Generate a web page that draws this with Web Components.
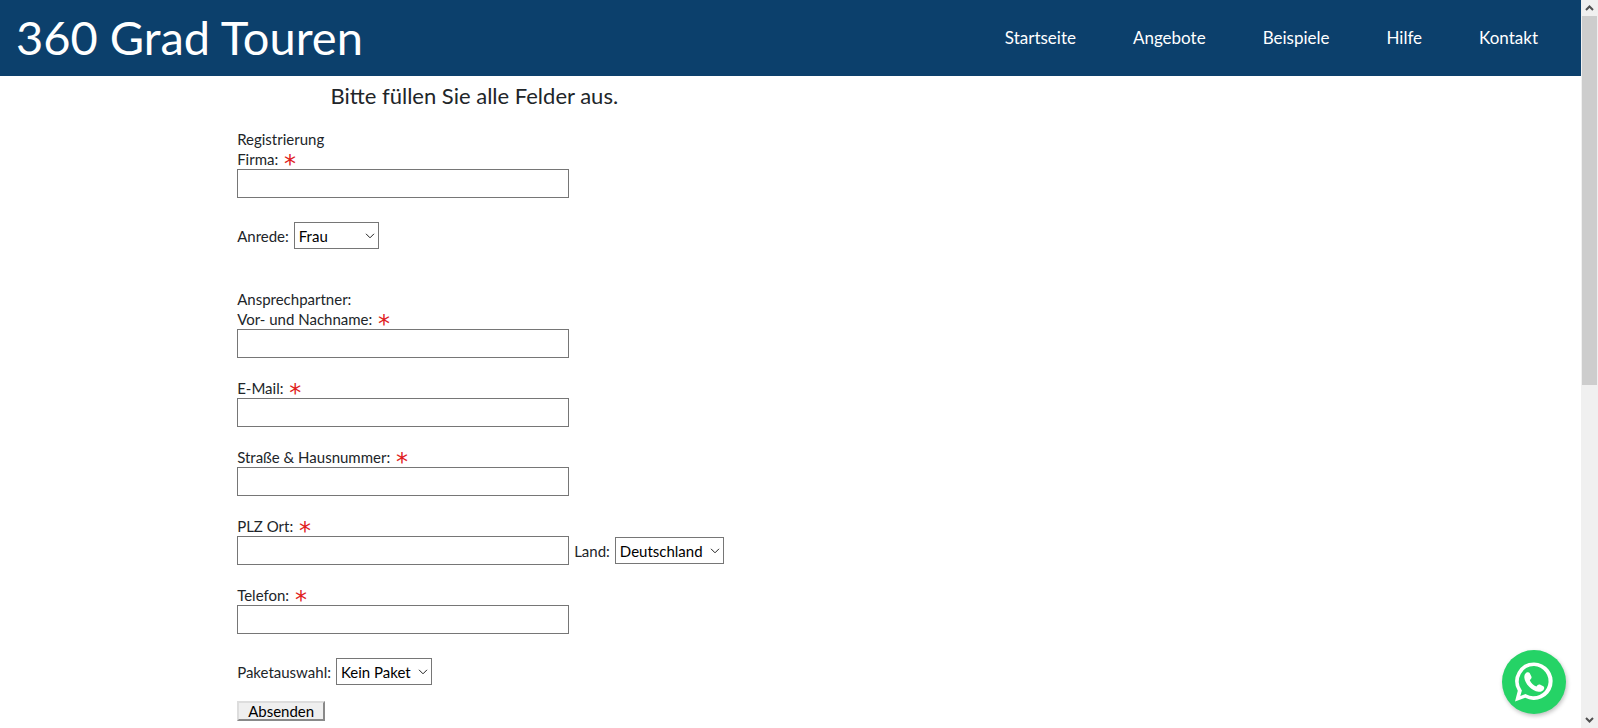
<!DOCTYPE html>
<html lang="de">
<head>
<meta charset="utf-8">
<meta name="viewport" content="width=device-width, initial-scale=1">
<title>360 Grad Touren</title>
<style>
  body {
    margin: 0;
    display: grid;
    grid-template-columns: minmax(0, 1fr) 17px;
    min-height: 100vh;
    background: #fff;
    color: #212529;
    font: 15px/20px Lato, "Liberation Sans", sans-serif;
  }
</style>
</head>
<body>
<div>
  <site-header>
    360 Grad Touren
    <nav-link slot="nav">Startseite</nav-link>
    <nav-link slot="nav">Angebote</nav-link>
    <nav-link slot="nav">Beispiele</nav-link>
    <nav-link slot="nav">Hilfe</nav-link>
    <nav-link slot="nav">Kontakt</nav-link>
  </site-header>
  <registration-form></registration-form>
</div>
<scroll-track></scroll-track>
<whatsapp-button></whatsapp-button>

<script>
class BaseElement extends HTMLElement {
  render(html) {
    if (!this.shadowRoot) this.attachShadow({ mode: 'open' });
    this.shadowRoot.innerHTML = html;
  }
}

customElements.define('nav-link', class extends BaseElement {
  connectedCallback() {
    this.render(`
      <style>
        :host { display: block; }
        a { color: #fff; text-decoration: none; font-size: 17px; }
      </style>
      <a href="#"><slot></slot></a>`);
  }
});

customElements.define('site-header', class extends BaseElement {
  connectedCallback() {
    this.render(`
      <style>
        :host { display: block; }
        header {
          display: flex; align-items: center; justify-content: space-between;
          box-sizing: border-box; min-height: 76px; padding: 0 43px 0 16px;
          background: #0c406c; color: #fff;
        }
        .brand { font-size: 47px; line-height: 60px; padding-bottom: 2px; }
        nav { display: flex; gap: 57px; }
      </style>
      <header>
        <div class="brand"><slot></slot></div>
        <nav><slot name="nav"></slot></nav>
      </header>`);
  }
});

customElements.define('text-field', class extends BaseElement {
  connectedCallback() {
    this.render(`
      <style>
        :host { display: block; }
        label { display: block; }
        .star {
          color: #e02020; font: 24px/0 "DejaVu Sans", sans-serif;
          vertical-align: -7px; margin-left: 2px;
        }
        input {
          display: block; box-sizing: border-box; width: 100%; height: 29px;
          margin: 0; padding: 4px; border: 1px solid #767676; border-radius: 0;
          background: #fff; font: inherit;
        }
      </style>
      <label for="field"><slot></slot> <span class="star">*</span></label>
      <input id="field" type="${this.getAttribute('type') || 'text'}" required>`);
  }
});

customElements.define('select-field', class extends BaseElement {
  connectedCallback() {
    const options = this.getAttribute('options').split('|')
      .map(text => `<option>${text}</option>`).join('');
    this.render(`
      <style>
        :host { display: flex; align-items: center; gap: 5px; }
        .box { display: grid; align-items: center; width: var(--select-width, auto); }
        select, svg { grid-area: 1 / 1; }
        select {
          appearance: none; box-sizing: border-box; width: 100%; height: 27px;
          margin: 0; padding: 0 20px 0 4px; border: 1px solid #767676;
          border-radius: 0; background: #fff; color: #000; font: inherit;
        }
        svg { justify-self: end; margin-right: 4px; pointer-events: none; }
      </style>
      <label for="choice"><slot></slot></label>
      <span class="box">
        <select id="choice">${options}</select>
        <svg width="10" height="6" viewBox="0 0 10 6" fill="none" stroke="#222"><path d="M1 .8 5 4.8 9 .8"/></svg>
      </span>`);
  }
});

customElements.define('registration-form', class extends BaseElement {
  connectedCallback() {
    this.render(`
      <style>
        :host { display: block; margin-left: 15%; width: 30%; }
        h1 {
          margin: 0; padding: 5px 0 18px; text-align: center;
          font-size: 22px; font-weight: 400; line-height: 30px; color: #212529;
        }
        form { display: flex; flex-direction: column; margin: 0; }
        p { margin: 0; }
        text-field { flex: none; width: 70%; margin-bottom: 20px; }
        .short { margin-bottom: 24px; }
        .salutation { --select-width: 85px; margin-bottom: 40px; }
        .row { display: flex; align-items: flex-end; gap: 5px; }
        .row select-field { --select-width: 109px; margin-bottom: 21px; }
        .package { --select-width: 96px; margin-bottom: 16px; }
        button {
          align-self: flex-start; height: 20px; padding: 0 8px; width: 88px;
          border: 2px outset #ddd; border-radius: 0; background: #efefef;
          color: #000; font: inherit; line-height: 16px;
        }
      </style>
      <h1>Bitte füllen Sie alle Felder aus.</h1>
      <form>
        <p>Registrierung</p>
        <text-field class="short">Firma:</text-field>
        <select-field class="salutation" options="Frau|Herr|Divers">Anrede:</select-field>
        <p>Ansprechpartner:</p>
        <text-field>Vor- und Nachname:</text-field>
        <text-field type="email">E-Mail:</text-field>
        <text-field>Straße &amp; Hausnummer:</text-field>
        <div class="row">
          <text-field>PLZ Ort:</text-field>
          <select-field options="Deutschland|Österreich|Schweiz">Land:</select-field>
        </div>
        <text-field class="short" type="tel">Telefon:</text-field>
        <select-field class="package" options="Kein Paket|Paket 1|Paket 2">Paketauswahl:</select-field>
        <button type="button">Absenden</button>
      </form>`);
  }
});

customElements.define('scroll-track', class extends BaseElement {
  connectedCallback() {
    this.render(`
      <style>
        :host {
          display: flex; flex-direction: column; position: sticky; top: 0;
          box-sizing: border-box; height: 100vh; padding: 0 1px; background: #f0f0f0;
        }
        .cap { display: grid; place-items: center; flex: 0 0 16px; }
        .track { flex: 1; }
        .thumb { height: 53%; background: #cdcdcd; }
      </style>
      <div class="cap"><svg width="9" height="6" viewBox="0 0 9 6" fill="none" stroke="#505050" stroke-width="2"><path d="M1 5 4.500 1.500 8 5"/></svg></div>
      <div class="track"><div class="thumb"></div></div>
      <div class="cap"><svg width="9" height="6" viewBox="0 0 9 6" fill="none" stroke="#505050" stroke-width="2"><path d="M1 1 4.500 4.500 8 1"/></svg></div>`);
  }
});

customElements.define('whatsapp-button', class extends BaseElement {
  connectedCallback() {
    this.render(`
      <style>
        :host { display: block; position: fixed; right: 32px; bottom: 14px; }
        a {
          display: block; width: 64px; height: 64px; border-radius: 50%;
          background: #25d366; box-shadow: 1px 2px 4px rgba(0, 0, 0, .25);
        }
        svg { display: block; }
      </style>
      <a href="#" aria-label="WhatsApp">
        <svg width="64" height="64" viewBox="0 0 64 64">
          <path fill="#fff" fill-rule="evenodd" d="M32 12.500a18.700 18.700 0 1 1-8.800 35.200L13 51.500l2.800-10.800A18.700 18.700 0 0 1 32 12.500zm0 3.600a15.100 15.100 0 0 0-12.700 23.300l.6 1-1.600 5.500 5.200-1.900 1 .6A15.100 15.100 0 1 0 32 16.100z"/>
          <path fill="#fff" d="M24.500 22.600c1.200-.7 2.700-.5 3.300.6l1.600 3.400c.4 1 .1 1.800-.6 2.500l-1 1.100c1.200 2.600 3.600 5 6.600 6.400l1.300-1.500c.6-.7 1.400-.9 2.200-.5l3.400 1.700c1 .5 1.100 1.600.7 2.700-.8 2.100-3.200 3.100-5.400 2.800C29.500 40.800 22.800 33.500 22.300 27.500c-.1-2 .7-3.900 2.200-4.900z"/>
        </svg>
      </a>`);
  }
});
</script>
</body>
</html>
